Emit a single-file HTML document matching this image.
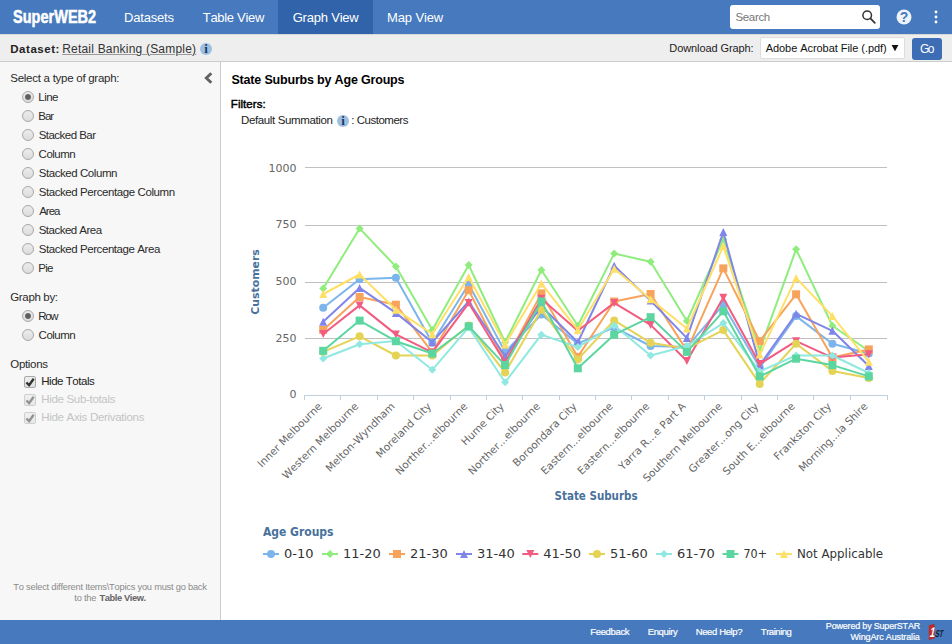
<!DOCTYPE html>
<html lang="en"><head><meta charset="utf-8"><title>SuperWEB2 - Graph View</title>
<style>
html,body{margin:0;padding:0;}
body{width:952px;height:644px;overflow:hidden;position:relative;background:#fff;font-family:"Liberation Sans",sans-serif;font-size:12px;color:#222;font-kerning:none;}
.abs,.t{position:absolute;white-space:nowrap;}
.t{line-height:20px;}
#hdr{position:absolute;left:0;top:0;width:952px;height:34px;background:#4679bd;}
#hdr .tab.on{position:absolute;top:0;height:34px;background:#3163ab;}
#logo{position:absolute;left:12.6px;top:0;height:34px;line-height:33px;color:#fff;font-weight:bold;font-size:19px;transform:scaleX(0.765);transform-origin:0 50%;white-space:nowrap;-webkit-text-stroke:0.55px #fff;}
#search{position:absolute;left:730px;top:5px;width:150px;height:24px;background:#fff;border-radius:3px;box-sizing:border-box;}
#sub{position:absolute;left:0;top:34px;width:952px;height:27px;background:#eee;border-bottom:1px solid #ccc;box-sizing:content-box;}
#left{position:absolute;left:0;top:62px;width:220px;height:558px;background:#f7f7f7;border-right:1px solid #ccc;}
#foot{position:absolute;left:0;top:620px;width:952px;height:24px;background:#4679bd;}
.radio{position:absolute;width:10px;height:10px;border-radius:50%;border:1px solid #a8a8a8;background:linear-gradient(#ececec,#dcdcdc);box-sizing:content-box;}
.radio.on::after{content:"";position:absolute;left:2px;top:2px;width:6px;height:6px;border-radius:50%;background:radial-gradient(#5e5e5e 40%,#808080 100%);}
.cb{position:absolute;width:10px;height:10px;border:1px solid #a8a8a8;border-radius:2px;background:linear-gradient(#eeeeee,#e0e0e0);box-sizing:content-box;}
.cb.dis{border-color:#cfcfcf;background:linear-gradient(#f0f0f0,#e8e8e8);}
.cb svg{position:absolute;left:-1px;top:-1px;}
.info{position:absolute;width:12px;height:12px;border-radius:50%;background:#9dbfe0;color:#1a3a60;font-family:"Liberation Serif",serif;font-weight:bold;font-size:13px;line-height:11px;text-align:center;}
</style></head><body>
<div id="hdr">
 <div id="logo">SuperWEB2</div>
 <div class="tab on" style="left:278px;width:95px"></div>
 <div id="search">
  <svg class="abs" style="left:131px;top:4px" width="16" height="16" viewBox="0 0 16 16"><circle cx="6.2" cy="6.2" r="4.3" fill="none" stroke="#333" stroke-width="1.5"/><path d="M9.4 9.4L13.8 13.8" stroke="#333" stroke-width="1.7" stroke-linecap="round"/></svg>
 </div>
 <svg class="abs" style="left:895px;top:8px" width="18" height="18" viewBox="0 0 18 18"><circle cx="9" cy="9" r="7.5" fill="#eef2f9"/><text x="9" y="14" text-anchor="middle" font-family="Liberation Sans,sans-serif" font-weight="bold" font-size="14" fill="#4679bd">?</text></svg>
 <svg class="abs" style="left:932px;top:8px" width="8" height="18" viewBox="0 0 8 18"><circle cx="4" cy="4" r="1.4" fill="#fff"/><circle cx="4" cy="9" r="1.4" fill="#fff"/><circle cx="4" cy="14" r="1.4" fill="#fff"/></svg>
</div>
<div id="sub"><div class="abs" style="left:0;top:0;width:952px;height:1px;background:#d8d8d8"></div>
 <span class="info" style="left:200px;top:9px">i</span>
 <div class="abs" style="left:760px;top:3px;width:145px;height:22px;background:#fff;border:1px solid #ddd;border-radius:2px;box-sizing:border-box"></div>
 <svg class="abs" style="left:891px;top:11px" width="8" height="7" viewBox="0 0 8 7"><path d="M0.6 0H7.4L4 6.3Z" fill="#111"/></svg>
 <div class="abs" style="left:912px;top:4px;width:30px;height:22px;background:#3d6db5;border-radius:3px;"></div>
</div>
<div id="left"></div>
<svg class="abs" style="left:203px;top:71px" width="11" height="14" viewBox="0 0 11 14"><path d="M8.3 2.2L3.3 7L8.3 11.8" fill="none" stroke="#626262" stroke-width="2.9"/></svg>
<span class="info" style="left:337px;top:115px">i</span>
<svg id="chart" width="732" height="480" viewBox="220 140 732 480" style="position:absolute;left:220px;top:140px" font-family="'DejaVu Sans','Liberation Sans',sans-serif">
<path d="M305.0 338.5H887.0" stroke="#c0c0c0" stroke-width="1" fill="none"/>
<path d="M305.0 282.5H887.0" stroke="#c0c0c0" stroke-width="1" fill="none"/>
<path d="M305.0 225.5H887.0" stroke="#c0c0c0" stroke-width="1" fill="none"/>
<path d="M305.0 167.5H887.0" stroke="#c0c0c0" stroke-width="1" fill="none"/>
<path d="M304.0 395.5H888.0" stroke="#c0d0e0" stroke-width="1" fill="none"/>
<path d="M304.5 395.0V400.0" stroke="#c0d0e0" stroke-width="1" fill="none"/>
<path d="M340.5 395.0V400.0" stroke="#c0d0e0" stroke-width="1" fill="none"/>
<path d="M377.5 395.0V400.0" stroke="#c0d0e0" stroke-width="1" fill="none"/>
<path d="M413.5 395.0V400.0" stroke="#c0d0e0" stroke-width="1" fill="none"/>
<path d="M450.5 395.0V400.0" stroke="#c0d0e0" stroke-width="1" fill="none"/>
<path d="M486.5 395.0V400.0" stroke="#c0d0e0" stroke-width="1" fill="none"/>
<path d="M522.5 395.0V400.0" stroke="#c0d0e0" stroke-width="1" fill="none"/>
<path d="M559.5 395.0V400.0" stroke="#c0d0e0" stroke-width="1" fill="none"/>
<path d="M595.5 395.0V400.0" stroke="#c0d0e0" stroke-width="1" fill="none"/>
<path d="M631.5 395.0V400.0" stroke="#c0d0e0" stroke-width="1" fill="none"/>
<path d="M668.5 395.0V400.0" stroke="#c0d0e0" stroke-width="1" fill="none"/>
<path d="M704.5 395.0V400.0" stroke="#c0d0e0" stroke-width="1" fill="none"/>
<path d="M741.5 395.0V400.0" stroke="#c0d0e0" stroke-width="1" fill="none"/>
<path d="M777.5 395.0V400.0" stroke="#c0d0e0" stroke-width="1" fill="none"/>
<path d="M813.5 395.0V400.0" stroke="#c0d0e0" stroke-width="1" fill="none"/>
<path d="M850.5 395.0V400.0" stroke="#c0d0e0" stroke-width="1" fill="none"/>
<path d="M887.5 395.0V400.0" stroke="#c0d0e0" stroke-width="1" fill="none"/>
<text x="296.6" y="398.3" text-anchor="end" font-size="11" fill="#666">0</text>
<text x="296.6" y="341.6" text-anchor="end" font-size="11" fill="#666">250</text>
<text x="296.6" y="284.9" text-anchor="end" font-size="11" fill="#666">500</text>
<text x="296.6" y="228.2" text-anchor="end" font-size="11" fill="#666">750</text>
<text x="296.6" y="171.5" text-anchor="end" font-size="11" fill="#666">1000</text>
<text x="322.7" y="407.0" text-anchor="end" font-size="10.5" fill="#666" transform="rotate(-45 322.7 407.0)">Inner Melbourne</text>
<text x="359.1" y="407.0" text-anchor="end" font-size="10.5" fill="#666" transform="rotate(-45 359.1 407.0)">Western Melbourne</text>
<text x="395.4" y="407.0" text-anchor="end" font-size="10.5" fill="#666" transform="rotate(-45 395.4 407.0)">Melton-Wyndham</text>
<text x="431.8" y="407.0" text-anchor="end" font-size="10.5" fill="#666" transform="rotate(-45 431.8 407.0)">Moreland City</text>
<text x="468.2" y="407.0" text-anchor="end" font-size="10.5" fill="#666" transform="rotate(-45 468.2 407.0)">Norther...elbourne</text>
<text x="504.6" y="407.0" text-anchor="end" font-size="10.5" fill="#666" transform="rotate(-45 504.6 407.0)">Hume City</text>
<text x="540.9" y="407.0" text-anchor="end" font-size="10.5" fill="#666" transform="rotate(-45 540.9 407.0)">Norther...elbourne</text>
<text x="577.3" y="407.0" text-anchor="end" font-size="10.5" fill="#666" transform="rotate(-45 577.3 407.0)">Boroondara City</text>
<text x="613.7" y="407.0" text-anchor="end" font-size="10.5" fill="#666" transform="rotate(-45 613.7 407.0)">Eastern...elbourne</text>
<text x="650.1" y="407.0" text-anchor="end" font-size="10.5" fill="#666" transform="rotate(-45 650.1 407.0)">Eastern...elbourne</text>
<text x="686.4" y="407.0" text-anchor="end" font-size="10.5" fill="#666" transform="rotate(-45 686.4 407.0)">Yarra R...e Part A</text>
<text x="722.8" y="407.0" text-anchor="end" font-size="10.5" fill="#666" transform="rotate(-45 722.8 407.0)">Southern Melbourne</text>
<text x="759.2" y="407.0" text-anchor="end" font-size="10.5" fill="#666" transform="rotate(-45 759.2 407.0)">Greater...ong City</text>
<text x="795.6" y="407.0" text-anchor="end" font-size="10.5" fill="#666" transform="rotate(-45 795.6 407.0)">South E...elbourne</text>
<text x="831.9" y="407.0" text-anchor="end" font-size="10.5" fill="#666" transform="rotate(-45 831.9 407.0)">Frankston City</text>
<text x="868.3" y="407.0" text-anchor="end" font-size="10.5" fill="#666" transform="rotate(-45 868.3 407.0)">Morning...la Shire</text>
<text x="259" y="282" text-anchor="middle" font-size="11.3" font-weight="bold" fill="#48719c" transform="rotate(-90 259 282)" textLength="65.5" lengthAdjust="spacingAndGlyphs">Customers</text>
<text x="554.6" y="499.6" font-size="12" font-weight="bold" fill="#48719c" textLength="83" lengthAdjust="spacingAndGlyphs">State Suburbs</text>
<polyline points="323.2,307.7 359.6,279.3 395.9,277.7 432.3,342.8 468.7,284.3 505.1,351.9 541.4,314.5 577.8,343.7 614.2,327.4 650.6,346.0 686.9,347.1 723.3,304.7 759.7,367.4 796.1,316.1 832.4,343.7 868.8,353.5" fill="none" stroke="#7cb5ec" stroke-width="2" stroke-linejoin="round" stroke-linecap="round"/>
<circle cx="323.2" cy="307.7" r="4" fill="#7cb5ec"/>
<circle cx="359.6" cy="279.3" r="4" fill="#7cb5ec"/>
<circle cx="395.9" cy="277.7" r="4" fill="#7cb5ec"/>
<circle cx="432.3" cy="342.8" r="4" fill="#7cb5ec"/>
<circle cx="468.7" cy="284.3" r="4" fill="#7cb5ec"/>
<circle cx="505.1" cy="351.9" r="4" fill="#7cb5ec"/>
<circle cx="541.4" cy="314.5" r="4" fill="#7cb5ec"/>
<circle cx="577.8" cy="343.7" r="4" fill="#7cb5ec"/>
<circle cx="614.2" cy="327.4" r="4" fill="#7cb5ec"/>
<circle cx="650.6" cy="346.0" r="4" fill="#7cb5ec"/>
<circle cx="686.9" cy="347.1" r="4" fill="#7cb5ec"/>
<circle cx="723.3" cy="304.7" r="4" fill="#7cb5ec"/>
<circle cx="759.7" cy="367.4" r="4" fill="#7cb5ec"/>
<circle cx="796.1" cy="316.1" r="4" fill="#7cb5ec"/>
<circle cx="832.4" cy="343.7" r="4" fill="#7cb5ec"/>
<circle cx="868.8" cy="353.5" r="4" fill="#7cb5ec"/>
<polyline points="323.2,288.4 359.6,228.4 395.9,266.6 432.3,329.9 468.7,265.0 505.1,342.2 541.4,270.0 577.8,325.8 614.2,253.6 650.6,261.8 686.9,321.0 723.3,239.6 759.7,350.1 796.1,249.3 832.4,325.8 868.8,351.0" fill="none" stroke="#90ed7d" stroke-width="2" stroke-linejoin="round" stroke-linecap="round"/>
<path d="M323.2 284.4L327.2 288.4L323.2 292.4L319.2 288.4Z" fill="#90ed7d"/>
<path d="M359.6 224.4L363.6 228.4L359.6 232.4L355.6 228.4Z" fill="#90ed7d"/>
<path d="M395.9 262.6L399.9 266.6L395.9 270.6L391.9 266.6Z" fill="#90ed7d"/>
<path d="M432.3 325.9L436.3 329.9L432.3 333.9L428.3 329.9Z" fill="#90ed7d"/>
<path d="M468.7 261.0L472.7 265.0L468.7 269.0L464.7 265.0Z" fill="#90ed7d"/>
<path d="M505.1 338.2L509.1 342.2L505.1 346.2L501.1 342.2Z" fill="#90ed7d"/>
<path d="M541.4 266.0L545.4 270.0L541.4 274.0L537.4 270.0Z" fill="#90ed7d"/>
<path d="M577.8 321.8L581.8 325.8L577.8 329.8L573.8 325.8Z" fill="#90ed7d"/>
<path d="M614.2 249.6L618.2 253.6L614.2 257.6L610.2 253.6Z" fill="#90ed7d"/>
<path d="M650.6 257.8L654.6 261.8L650.6 265.8L646.6 261.8Z" fill="#90ed7d"/>
<path d="M686.9 317.0L690.9 321.0L686.9 325.0L682.9 321.0Z" fill="#90ed7d"/>
<path d="M723.3 235.6L727.3 239.6L723.3 243.6L719.3 239.6Z" fill="#90ed7d"/>
<path d="M759.7 346.1L763.7 350.1L759.7 354.1L755.7 350.1Z" fill="#90ed7d"/>
<path d="M796.1 245.3L800.1 249.3L796.1 253.3L792.1 249.3Z" fill="#90ed7d"/>
<path d="M832.4 321.8L836.4 325.8L832.4 329.8L828.4 325.8Z" fill="#90ed7d"/>
<path d="M868.8 347.0L872.8 351.0L868.8 355.0L864.8 351.0Z" fill="#90ed7d"/>
<polyline points="323.2,329.9 359.6,297.0 395.9,304.7 432.3,352.4 468.7,290.2 505.1,361.7 541.4,293.4 577.8,356.9 614.2,301.5 650.6,294.0 686.9,350.6 723.3,268.4 759.7,341.2 796.1,294.3 832.4,357.6 868.8,349.4" fill="none" stroke="#f7a35c" stroke-width="2" stroke-linejoin="round" stroke-linecap="round"/>
<rect x="319.2" y="325.9" width="8" height="8" fill="#f7a35c"/>
<rect x="355.6" y="293.0" width="8" height="8" fill="#f7a35c"/>
<rect x="391.9" y="300.7" width="8" height="8" fill="#f7a35c"/>
<rect x="428.3" y="348.4" width="8" height="8" fill="#f7a35c"/>
<rect x="464.7" y="286.2" width="8" height="8" fill="#f7a35c"/>
<rect x="501.1" y="357.7" width="8" height="8" fill="#f7a35c"/>
<rect x="537.4" y="289.4" width="8" height="8" fill="#f7a35c"/>
<rect x="573.8" y="352.9" width="8" height="8" fill="#f7a35c"/>
<rect x="610.2" y="297.5" width="8" height="8" fill="#f7a35c"/>
<rect x="646.6" y="290.0" width="8" height="8" fill="#f7a35c"/>
<rect x="682.9" y="346.6" width="8" height="8" fill="#f7a35c"/>
<rect x="719.3" y="264.4" width="8" height="8" fill="#f7a35c"/>
<rect x="755.7" y="337.2" width="8" height="8" fill="#f7a35c"/>
<rect x="792.1" y="290.3" width="8" height="8" fill="#f7a35c"/>
<rect x="828.4" y="353.6" width="8" height="8" fill="#f7a35c"/>
<rect x="864.8" y="345.4" width="8" height="8" fill="#f7a35c"/>
<polyline points="323.2,321.7 359.6,287.9 395.9,312.9 432.3,342.2 468.7,301.5 505.1,356.2 541.4,306.3 577.8,342.2 614.2,265.7 650.6,300.6 686.9,338.1 723.3,232.1 759.7,365.1 796.1,313.8 832.4,330.8 868.8,366.0" fill="none" stroke="#8085e9" stroke-width="2" stroke-linejoin="round" stroke-linecap="round"/>
<path d="M323.2 317.7L327.2 325.7L319.2 325.7Z" fill="#8085e9"/>
<path d="M359.6 283.9L363.6 291.9L355.6 291.9Z" fill="#8085e9"/>
<path d="M395.9 308.9L399.9 316.9L391.9 316.9Z" fill="#8085e9"/>
<path d="M432.3 338.2L436.3 346.2L428.3 346.2Z" fill="#8085e9"/>
<path d="M468.7 297.5L472.7 305.5L464.7 305.5Z" fill="#8085e9"/>
<path d="M505.1 352.2L509.1 360.2L501.1 360.2Z" fill="#8085e9"/>
<path d="M541.4 302.3L545.4 310.3L537.4 310.3Z" fill="#8085e9"/>
<path d="M577.8 338.2L581.8 346.2L573.8 346.2Z" fill="#8085e9"/>
<path d="M614.2 261.7L618.2 269.7L610.2 269.7Z" fill="#8085e9"/>
<path d="M650.6 296.6L654.6 304.6L646.6 304.6Z" fill="#8085e9"/>
<path d="M686.9 334.1L690.9 342.1L682.9 342.1Z" fill="#8085e9"/>
<path d="M723.3 228.1L727.3 236.1L719.3 236.1Z" fill="#8085e9"/>
<path d="M759.7 361.1L763.7 369.1L755.7 369.1Z" fill="#8085e9"/>
<path d="M796.1 309.8L800.1 317.8L792.1 317.8Z" fill="#8085e9"/>
<path d="M832.4 326.8L836.4 334.8L828.4 334.8Z" fill="#8085e9"/>
<path d="M868.8 362.0L872.8 370.0L864.8 370.0Z" fill="#8085e9"/>
<polyline points="323.2,334.0 359.6,305.4 395.9,334.4 432.3,352.4 468.7,303.1 505.1,362.6 541.4,298.8 577.8,330.8 614.2,302.9 650.6,324.9 686.9,361.0 723.3,297.7 759.7,363.9 796.1,341.2 832.4,357.6 868.8,354.2" fill="none" stroke="#f15c80" stroke-width="2" stroke-linejoin="round" stroke-linecap="round"/>
<path d="M319.2 330.0L327.2 330.0L323.2 338.0Z" fill="#f15c80"/>
<path d="M355.6 301.4L363.6 301.4L359.6 309.4Z" fill="#f15c80"/>
<path d="M391.9 330.4L399.9 330.4L395.9 338.4Z" fill="#f15c80"/>
<path d="M428.3 348.4L436.3 348.4L432.3 356.4Z" fill="#f15c80"/>
<path d="M464.7 299.1L472.7 299.1L468.7 307.1Z" fill="#f15c80"/>
<path d="M501.1 358.6L509.1 358.6L505.1 366.6Z" fill="#f15c80"/>
<path d="M537.4 294.8L545.4 294.8L541.4 302.8Z" fill="#f15c80"/>
<path d="M573.8 326.8L581.8 326.8L577.8 334.8Z" fill="#f15c80"/>
<path d="M610.2 298.9L618.2 298.9L614.2 306.9Z" fill="#f15c80"/>
<path d="M646.6 320.9L654.6 320.9L650.6 328.9Z" fill="#f15c80"/>
<path d="M682.9 357.0L690.9 357.0L686.9 365.0Z" fill="#f15c80"/>
<path d="M719.3 293.7L727.3 293.7L723.3 301.7Z" fill="#f15c80"/>
<path d="M755.7 359.9L763.7 359.9L759.7 367.9Z" fill="#f15c80"/>
<path d="M792.1 337.2L800.1 337.2L796.1 345.2Z" fill="#f15c80"/>
<path d="M828.4 353.6L836.4 353.6L832.4 361.6Z" fill="#f15c80"/>
<path d="M864.8 350.2L872.8 350.2L868.8 358.2Z" fill="#f15c80"/>
<polyline points="323.2,351.9 359.6,336.3 395.9,355.5 432.3,355.5 468.7,325.4 505.1,372.6 541.4,309.7 577.8,359.4 614.2,320.4 650.6,342.8 686.9,348.7 723.3,330.1 759.7,383.9 796.1,343.7 832.4,371.0 868.8,378.0" fill="none" stroke="#e4d354" stroke-width="2" stroke-linejoin="round" stroke-linecap="round"/>
<circle cx="323.2" cy="351.9" r="4" fill="#e4d354"/>
<circle cx="359.6" cy="336.3" r="4" fill="#e4d354"/>
<circle cx="395.9" cy="355.5" r="4" fill="#e4d354"/>
<circle cx="432.3" cy="355.5" r="4" fill="#e4d354"/>
<circle cx="468.7" cy="325.4" r="4" fill="#e4d354"/>
<circle cx="505.1" cy="372.6" r="4" fill="#e4d354"/>
<circle cx="541.4" cy="309.7" r="4" fill="#e4d354"/>
<circle cx="577.8" cy="359.4" r="4" fill="#e4d354"/>
<circle cx="614.2" cy="320.4" r="4" fill="#e4d354"/>
<circle cx="650.6" cy="342.8" r="4" fill="#e4d354"/>
<circle cx="686.9" cy="348.7" r="4" fill="#e4d354"/>
<circle cx="723.3" cy="330.1" r="4" fill="#e4d354"/>
<circle cx="759.7" cy="383.9" r="4" fill="#e4d354"/>
<circle cx="796.1" cy="343.7" r="4" fill="#e4d354"/>
<circle cx="832.4" cy="371.0" r="4" fill="#e4d354"/>
<circle cx="868.8" cy="378.0" r="4" fill="#e4d354"/>
<polyline points="323.2,358.5 359.6,344.2 395.9,341.0 432.3,369.8 468.7,327.4 505.1,382.3 541.4,334.7 577.8,347.1 614.2,325.4 650.6,355.5 686.9,346.0 723.3,323.1 759.7,371.4 796.1,355.5 832.4,355.5 868.8,373.0" fill="none" stroke="#91e8e1" stroke-width="2" stroke-linejoin="round" stroke-linecap="round"/>
<path d="M323.2 354.5L327.2 358.5L323.2 362.5L319.2 358.5Z" fill="#91e8e1"/>
<path d="M359.6 340.2L363.6 344.2L359.6 348.2L355.6 344.2Z" fill="#91e8e1"/>
<path d="M395.9 337.0L399.9 341.0L395.9 345.0L391.9 341.0Z" fill="#91e8e1"/>
<path d="M432.3 365.8L436.3 369.8L432.3 373.8L428.3 369.8Z" fill="#91e8e1"/>
<path d="M468.7 323.4L472.7 327.4L468.7 331.4L464.7 327.4Z" fill="#91e8e1"/>
<path d="M505.1 378.3L509.1 382.3L505.1 386.3L501.1 382.3Z" fill="#91e8e1"/>
<path d="M541.4 330.7L545.4 334.7L541.4 338.7L537.4 334.7Z" fill="#91e8e1"/>
<path d="M577.8 343.1L581.8 347.1L577.8 351.1L573.8 347.1Z" fill="#91e8e1"/>
<path d="M614.2 321.4L618.2 325.4L614.2 329.4L610.2 325.4Z" fill="#91e8e1"/>
<path d="M650.6 351.5L654.6 355.5L650.6 359.5L646.6 355.5Z" fill="#91e8e1"/>
<path d="M686.9 342.0L690.9 346.0L686.9 350.0L682.9 346.0Z" fill="#91e8e1"/>
<path d="M723.3 319.1L727.3 323.1L723.3 327.1L719.3 323.1Z" fill="#91e8e1"/>
<path d="M759.7 367.4L763.7 371.4L759.7 375.4L755.7 371.4Z" fill="#91e8e1"/>
<path d="M796.1 351.5L800.1 355.5L796.1 359.5L792.1 355.5Z" fill="#91e8e1"/>
<path d="M832.4 351.5L836.4 355.5L832.4 359.5L828.4 355.5Z" fill="#91e8e1"/>
<path d="M868.8 369.0L872.8 373.0L868.8 377.0L864.8 373.0Z" fill="#91e8e1"/>
<polyline points="323.2,350.8 359.6,320.6 395.9,341.2 432.3,353.5 468.7,326.3 505.1,365.1 541.4,301.5 577.8,368.3 614.2,334.7 650.6,317.2 686.9,351.9 723.3,311.3 759.7,376.4 796.1,358.7 832.4,365.1 868.8,376.4" fill="none" stroke="#5cd6a0" stroke-width="2" stroke-linejoin="round" stroke-linecap="round"/>
<rect x="319.2" y="346.8" width="8" height="8" fill="#5cd6a0"/>
<rect x="355.6" y="316.6" width="8" height="8" fill="#5cd6a0"/>
<rect x="391.9" y="337.2" width="8" height="8" fill="#5cd6a0"/>
<rect x="428.3" y="349.5" width="8" height="8" fill="#5cd6a0"/>
<rect x="464.7" y="322.3" width="8" height="8" fill="#5cd6a0"/>
<rect x="501.1" y="361.1" width="8" height="8" fill="#5cd6a0"/>
<rect x="537.4" y="297.5" width="8" height="8" fill="#5cd6a0"/>
<rect x="573.8" y="364.3" width="8" height="8" fill="#5cd6a0"/>
<rect x="610.2" y="330.7" width="8" height="8" fill="#5cd6a0"/>
<rect x="646.6" y="313.2" width="8" height="8" fill="#5cd6a0"/>
<rect x="682.9" y="347.9" width="8" height="8" fill="#5cd6a0"/>
<rect x="719.3" y="307.3" width="8" height="8" fill="#5cd6a0"/>
<rect x="755.7" y="372.4" width="8" height="8" fill="#5cd6a0"/>
<rect x="792.1" y="354.7" width="8" height="8" fill="#5cd6a0"/>
<rect x="828.4" y="361.1" width="8" height="8" fill="#5cd6a0"/>
<rect x="864.8" y="372.4" width="8" height="8" fill="#5cd6a0"/>
<polyline points="323.2,294.0 359.6,274.5 395.9,309.7 432.3,334.0 468.7,277.0 505.1,344.4 541.4,283.6 577.8,329.9 614.2,268.8 650.6,299.3 686.9,328.5 723.3,246.1 759.7,354.6 796.1,277.9 832.4,316.1 868.8,361.7" fill="none" stroke="#ffe066" stroke-width="2" stroke-linejoin="round" stroke-linecap="round"/>
<path d="M323.2 290.0L327.2 298.0L319.2 298.0Z" fill="#ffe066"/>
<path d="M359.6 270.5L363.6 278.5L355.6 278.5Z" fill="#ffe066"/>
<path d="M395.9 305.7L399.9 313.7L391.9 313.7Z" fill="#ffe066"/>
<path d="M432.3 330.0L436.3 338.0L428.3 338.0Z" fill="#ffe066"/>
<path d="M468.7 273.0L472.7 281.0L464.7 281.0Z" fill="#ffe066"/>
<path d="M505.1 340.4L509.1 348.4L501.1 348.4Z" fill="#ffe066"/>
<path d="M541.4 279.6L545.4 287.6L537.4 287.6Z" fill="#ffe066"/>
<path d="M577.8 325.9L581.8 333.9L573.8 333.9Z" fill="#ffe066"/>
<path d="M614.2 264.8L618.2 272.8L610.2 272.8Z" fill="#ffe066"/>
<path d="M650.6 295.3L654.6 303.3L646.6 303.3Z" fill="#ffe066"/>
<path d="M686.9 324.5L690.9 332.5L682.9 332.5Z" fill="#ffe066"/>
<path d="M723.3 242.1L727.3 250.1L719.3 250.1Z" fill="#ffe066"/>
<path d="M759.7 350.6L763.7 358.6L755.7 358.6Z" fill="#ffe066"/>
<path d="M796.1 273.9L800.1 281.9L792.1 281.9Z" fill="#ffe066"/>
<path d="M832.4 312.1L836.4 320.1L828.4 320.1Z" fill="#ffe066"/>
<path d="M868.8 357.7L872.8 365.7L864.8 365.7Z" fill="#ffe066"/>
<text x="263" y="535.5" font-size="13" font-weight="bold" fill="#48719c" textLength="70.5" lengthAdjust="spacingAndGlyphs">Age Groups</text>
<path d="M263 554H279" stroke="#7cb5ec" stroke-width="2" fill="none"/>
<circle cx="271.0" cy="554.0" r="4" fill="#7cb5ec"/>
<text x="284" y="558" font-size="13" fill="#333">0-10</text>
<path d="M322 554H338" stroke="#90ed7d" stroke-width="2" fill="none"/>
<path d="M330.0 550.0L334.0 554.0L330.0 558.0L326.0 554.0Z" fill="#90ed7d"/>
<text x="343" y="558" font-size="13" fill="#333">11-20</text>
<path d="M389 554H405" stroke="#f7a35c" stroke-width="2" fill="none"/>
<rect x="393.0" y="550.0" width="8" height="8" fill="#f7a35c"/>
<text x="410" y="558" font-size="13" fill="#333">21-30</text>
<path d="M456 554H472" stroke="#8085e9" stroke-width="2" fill="none"/>
<path d="M464.0 550.0L468.0 558.0L460.0 558.0Z" fill="#8085e9"/>
<text x="477" y="558" font-size="13" fill="#333">31-40</text>
<path d="M522.3 554H538.3" stroke="#f15c80" stroke-width="2" fill="none"/>
<path d="M526.3 550.0L534.3 550.0L530.3 558.0Z" fill="#f15c80"/>
<text x="543.3" y="558" font-size="13" fill="#333">41-50</text>
<path d="M589 554H605" stroke="#e4d354" stroke-width="2" fill="none"/>
<circle cx="597.0" cy="554.0" r="4" fill="#e4d354"/>
<text x="610" y="558" font-size="13" fill="#333">51-60</text>
<path d="M656 554H672" stroke="#91e8e1" stroke-width="2" fill="none"/>
<path d="M664.0 550.0L668.0 554.0L664.0 558.0L660.0 554.0Z" fill="#91e8e1"/>
<text x="677" y="558" font-size="13" fill="#333">61-70</text>
<path d="M722.5 554H738.5" stroke="#5cd6a0" stroke-width="2" fill="none"/>
<rect x="726.5" y="550.0" width="8" height="8" fill="#5cd6a0"/>
<text x="743.5" y="558" font-size="13" fill="#333" textLength="23.5" lengthAdjust="spacingAndGlyphs">70+</text>
<path d="M776 554H792" stroke="#ffe066" stroke-width="2" fill="none"/>
<path d="M784.0 550.0L788.0 558.0L780.0 558.0Z" fill="#ffe066"/>
<text x="797" y="558" font-size="13" fill="#333" textLength="86" lengthAdjust="spacingAndGlyphs">Not Applicable</text>
</svg>
<div id="foot">
 <svg class="abs" style="left:920px;top:0px" width="32" height="24" viewBox="0 0 32 24"><path d="M8.8 5.3L14.2 3.9L14.4 18.3L8.8 19.9Z" fill="#c22b21"/><path d="M13.3 4.1L14.2 3.9L14.4 18.3L13.5 18.6Z" fill="#9a2622"/></svg>
 <span class="abs" style="left:929.2px;top:2.2px;font:bold 14px/20px 'Liberation Sans',sans-serif;color:#fff;transform:skewX(-11deg) scaleX(0.66);transform-origin:0 80%">1</span>
 <span class="abs" style="left:934px;top:3.8px;font:bold 10px/20px 'Liberation Sans',sans-serif;color:#111a2c;transform:skewX(-13deg) scaleX(0.62);transform-origin:0 80%">ST</span>
</div>
<div class="t" style="left:123.93px;top:8px;font-size:13px;letter-spacing:-0.167px;color:#fff;">Datasets</div>
<div class="t" style="left:202.81px;top:8px;font-size:13px;letter-spacing:-0.305px;color:#fff;">Table View</div>
<div class="t" style="left:292.65px;top:8px;font-size:13px;letter-spacing:-0.200px;color:#fff;">Graph View</div>
<div class="t" style="left:387.03px;top:8px;font-size:13px;letter-spacing:-0.120px;color:#fff;">Map View</div>
<div class="t" style="left:735.38px;top:7px;font-size:11.5px;letter-spacing:-0.314px;color:#777;">Search</div>
<div class="t" style="left:10.23px;top:39px;font-size:11.5px;letter-spacing:0.543px;color:#222;font-weight:700;">Dataset:</div>
<div class="t" style="left:62.22px;top:39px;font-size:12px;letter-spacing:0.202px;color:#333;text-decoration:underline;text-decoration-color:#999;text-decoration-thickness:1px;text-underline-offset:1px;">Retail Banking (Sample)</div>
<div class="t" style="left:669.30px;top:38px;font-size:11px;letter-spacing:-0.093px;color:#222;">Download Graph:</div>
<div class="t" style="left:765.68px;top:38px;font-size:11px;letter-spacing:-0.053px;color:#111;">Adobe Acrobat File (.pdf)</div>
<div class="t" style="left:920.00px;top:39px;font-size:12px;letter-spacing:-1.600px;color:#fff;">Go</div>
<div class="t" style="left:10.28px;top:68px;font-size:11.5px;letter-spacing:-0.264px;color:#2a2a2a;">Select a type of graph:</div>
<span class="radio on" style="left:22px;top:91px"></span>
<div class="t" style="left:38.26px;top:87px;font-size:11.5px;letter-spacing:-0.496px;color:#2a2a2a;">Line</div>
<span class="radio" style="left:22px;top:110px"></span>
<div class="t" style="left:38.26px;top:106px;font-size:11.5px;letter-spacing:-0.981px;color:#2a2a2a;">Bar</div>
<span class="radio" style="left:22px;top:129px"></span>
<div class="t" style="left:38.68px;top:125px;font-size:11.5px;letter-spacing:-0.533px;color:#2a2a2a;">Stacked Bar</div>
<span class="radio" style="left:22px;top:148px"></span>
<div class="t" style="left:38.62px;top:144px;font-size:11.5px;letter-spacing:-0.519px;color:#2a2a2a;">Column</div>
<span class="radio" style="left:22px;top:167px"></span>
<div class="t" style="left:38.68px;top:163px;font-size:11.5px;letter-spacing:-0.431px;color:#2a2a2a;">Stacked Column</div>
<span class="radio" style="left:22px;top:186px"></span>
<div class="t" style="left:38.68px;top:182px;font-size:11.5px;letter-spacing:-0.413px;color:#2a2a2a;">Stacked Percentage Column</div>
<span class="radio" style="left:22px;top:205px"></span>
<div class="t" style="left:39.18px;top:201px;font-size:11.5px;letter-spacing:-0.990px;color:#2a2a2a;">Area</div>
<span class="radio" style="left:22px;top:224px"></span>
<div class="t" style="left:38.68px;top:220px;font-size:11.5px;letter-spacing:-0.511px;color:#2a2a2a;">Stacked Area</div>
<span class="radio" style="left:22px;top:243px"></span>
<div class="t" style="left:38.68px;top:239px;font-size:11.5px;letter-spacing:-0.429px;color:#2a2a2a;">Stacked Percentage Area</div>
<span class="radio" style="left:22px;top:262px"></span>
<div class="t" style="left:38.26px;top:258px;font-size:11.5px;letter-spacing:-0.733px;color:#2a2a2a;">Pie</div>
<div class="t" style="left:10.22px;top:287px;font-size:11.5px;letter-spacing:-0.334px;color:#2a2a2a;">Graph by:</div>
<span class="radio on" style="left:22px;top:310px"></span>
<div class="t" style="left:38.26px;top:306px;font-size:11.5px;letter-spacing:-1.295px;color:#2a2a2a;">Row</div>
<span class="radio" style="left:22px;top:329px"></span>
<div class="t" style="left:38.62px;top:325px;font-size:11.5px;letter-spacing:-0.519px;color:#2a2a2a;">Column</div>
<div class="t" style="left:10.26px;top:354px;font-size:11.5px;letter-spacing:-0.312px;color:#2a2a2a;">Options</div>
<span class="cb" style="left:24px;top:376px"><svg width="12" height="12" viewBox="0 0 12 12"><path d="M2.4 6.5L5.1 9.2L9.7 2.8" fill="none" stroke="#333" stroke-width="2.4"/></svg></span>
<div class="t" style="left:41.26px;top:371px;font-size:11.5px;letter-spacing:-0.470px;color:#222;">Hide Totals</div>
<span class="cb dis" style="left:24px;top:394px"><svg width="12" height="12" viewBox="0 0 12 12"><path d="M2.4 6.5L5.1 9.2L9.7 2.8" fill="none" stroke="#939393" stroke-width="2.4"/></svg></span>
<div class="t" style="left:41.26px;top:389px;font-size:11.5px;letter-spacing:-0.319px;color:#c4c4c4;">Hide Sub-totals</div>
<span class="cb dis" style="left:24px;top:412px"><svg width="12" height="12" viewBox="0 0 12 12"><path d="M2.4 6.5L5.1 9.2L9.7 2.8" fill="none" stroke="#939393" stroke-width="2.4"/></svg></span>
<div class="t" style="left:41.26px;top:407px;font-size:11.5px;letter-spacing:-0.307px;color:#c4c4c4;">Hide Axis Derivations</div>
<div class="t" style="left:13.29px;top:577px;font-size:9.3px;letter-spacing:-0.229px;color:#8a8a8a;">To select different Items\Topics you must go back</div>
<div class="t" style="left:74.36px;top:588px;font-size:9.3px;letter-spacing:-0.243px;color:#8a8a8a;">to the</div>
<div class="t" style="left:99.40px;top:588px;font-size:9.3px;letter-spacing:-0.391px;color:#666;font-weight:700;">Table View.</div>
<div class="t" style="left:231.44px;top:70px;font-size:12.5px;letter-spacing:-0.182px;color:#000;font-weight:700;">State Suburbs by Age Groups</div>
<div class="t" style="left:230.86px;top:94px;font-size:11.5px;letter-spacing:0.042px;color:#000;-webkit-text-stroke:0.45px #000;">Filters:</div>
<div class="t" style="left:240.96px;top:110px;font-size:11.5px;letter-spacing:-0.363px;color:#222;">Default Summation</div>
<div class="t" style="left:351.25px;top:110px;font-size:11.5px;letter-spacing:-0.482px;color:#222;">: Customers</div>
<div class="t" style="left:590.22px;top:622px;font-size:9.5px;letter-spacing:-0.336px;color:#fff;-webkit-text-stroke:0.2px #fff;">Feedback</div>
<div class="t" style="left:647.72px;top:622px;font-size:9.5px;letter-spacing:-0.369px;color:#fff;-webkit-text-stroke:0.2px #fff;">Enquiry</div>
<div class="t" style="left:695.72px;top:622px;font-size:9.5px;letter-spacing:-0.382px;color:#fff;-webkit-text-stroke:0.2px #fff;">Need Help?</div>
<div class="t" style="left:760.79px;top:622px;font-size:9.5px;letter-spacing:-0.457px;color:#fff;-webkit-text-stroke:0.2px #fff;">Training</div>
<div class="t" style="left:825.86px;top:616px;font-size:9px;letter-spacing:-0.194px;color:#fff;-webkit-text-stroke:0.2px #fff;">Powered by SuperSTAR</div>
<div class="t" style="left:850.46px;top:627px;font-size:9px;letter-spacing:-0.136px;color:#fff;-webkit-text-stroke:0.2px #fff;">WingArc Australia</div>
</body></html>
